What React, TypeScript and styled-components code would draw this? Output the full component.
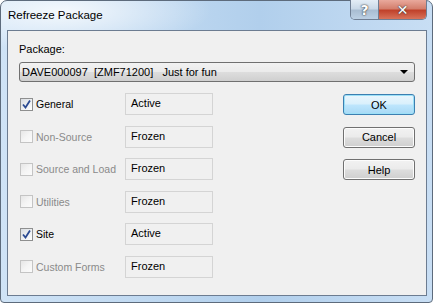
import styled, { createGlobalStyle } from 'styled-components';

const GlobalStyle = createGlobalStyle`
  html, body {
    margin: 0;
    padding: 0;
    background: #ffffff;
  }
  body {
    width: 433px;
    height: 303px;
    overflow: hidden;
    font-family: "Liberation Sans", Arial, sans-serif;
  }
`;

const Window = styled.div`
  box-sizing: border-box;
  width: 433px;
  height: 303px;
  display: flex;
  flex-direction: column;
  border: 1px solid #5d6b7c;
  border-radius: 7px 7px 4px 4px;
  background:
    radial-gradient(ellipse 150px 40px at 60px 10px, rgba(255, 255, 255, 0.8), rgba(255, 255, 255, 0) 100%),
    linear-gradient(90deg, #cfe3f6 0%, #bdd7f0 40%, #b1cfec 60%, #c8def4 100%);
`;

const TitleBar = styled.div`
  height: 29px;
  display: flex;
  align-items: flex-start;
  padding-left: 7px;
`;

const Title = styled.div`
  font-family: "Liberation Sans", Arial, sans-serif;
  font-size: 11.5px;
  line-height: 16px;
  padding-top: 6px;
  color: #000;
`;

const CaptionGroup = styled.div`
  margin-left: auto;
  margin-right: 5px;
  margin-top: -1px;
  display: flex;
  border: 1px solid #6f7e93;
  border-top: none;
  border-radius: 0 0 5px 5px;
  overflow: hidden;
`;

const CaptionButton = styled.div<{ $close?: boolean }>`
  width: ${p => (p.$close ? 47 : 27)}px;
  height: 19px;
  display: flex;
  align-items: center;
  justify-content: center;
  color: #fff;
  font-weight: bold;
  font-size: 14px;
  font-family: "DejaVu Sans", sans-serif;
  text-shadow: 0 0 2px #3a3a3a, 0 0 1px #3a3a3a;
  background: ${p =>
    p.$close
      ? 'linear-gradient(180deg, #e9a99c 0%, #d47f6d 45%, #c0422b 55%, #d8735a 100%)'
      : 'linear-gradient(180deg, #e4edf6 0%, #cad9e8 45%, #a9bdd2 55%, #bcd0e4 100%)'};
  & + & {
    border-left: 1px solid #6f7e93;
  }
`;

const Client = styled.div`
  flex: 1;
  margin: 0 5px 6px 6px;
  border: 1px solid #6c7c91;
  background: #f0f0f0;
  padding: 10px 11px 0 11px;
  font-size: 11px;
  color: #000;
`;

const FieldLabel = styled.div`
  line-height: 16px;
  height: 16px;
`;

const Combo = styled.div`
  margin-top: 5px;
  height: 18px;
  border: 1px solid #707070;
  border-radius: 3px;
  background: linear-gradient(180deg, #f2f2f2 0%, #ebebeb 48%, #dddddd 52%, #cfcfcf 100%);
  display: flex;
  align-items: center;
  padding: 0 6px 0 2px;
  white-space: pre;
`;

const ComboArrow = styled.span`
  margin-left: auto;
  width: 0;
  height: 0;
  border-left: 4px solid transparent;
  border-right: 4px solid transparent;
  border-top: 4px solid #000;
`;

const Body = styled.div`
  margin-top: 11px;
  display: flex;
`;

const Rows = styled.div`
  display: flex;
  flex-direction: column;
  gap: 10.6px;
`;

const Row = styled.div`
  display: grid;
  grid-template-columns: 106px 88px;
  height: 22px;
  align-items: center;
`;

const CheckLabel = styled.label<{ $disabled?: boolean }>`
  display: flex;
  align-items: center;
  gap: 3px;
  padding-left: 1px;
  font-size: 10.5px;
  color: ${p => (p.$disabled ? '#8a8a8a' : '#000')};
`;

const Box = styled.span<{ $disabled?: boolean }>`
  box-sizing: border-box;
  width: 13px;
  height: 13px;
  display: flex;
  align-items: center;
  justify-content: center;
  border: 1px solid ${p => (p.$disabled ? '#c4c4c4' : '#8e8f8f')};
  background: ${p =>
    p.$disabled
      ? 'linear-gradient(135deg, #e6e6e6 0%, #f4f4f4 50%, #fbfbfb 100%)'
      : 'linear-gradient(135deg, #d9dde2 0%, #eef0f2 55%, #ffffff 100%)'};
`;

const StatusBox = styled.div`
  box-sizing: border-box;
  height: 22px;
  border: 1px solid #d4d4d4;
  background: #f0f0f0;
  padding: 0 5px 2px 5px;
  display: flex;
  align-items: center;
`;

const Buttons = styled.div`
  margin-left: auto;
  margin-top: 1px;
  display: flex;
  flex-direction: column;
  gap: 11.5px;
`;

const DlgButton = styled.button<{ $default?: boolean }>`
  box-sizing: border-box;
  width: 72px;
  height: 21px;
  border: 1px solid ${p => (p.$default ? '#3c7fb1' : '#707070')};
  border-radius: 3px;
  font-family: "Liberation Sans", Arial, sans-serif;
  font-size: 11px;
  color: #000;
  padding: 0;
  background: ${p =>
    p.$default
      ? 'linear-gradient(180deg, #eaf6fd 0%, #d9f0fc 48%, #bee6fd 52%, #a7d9f5 100%)'
      : 'linear-gradient(180deg, #f2f2f2 0%, #ebebeb 48%, #dddddd 52%, #cfcfcf 100%)'};
  box-shadow: ${p => (p.$default ? 'inset 0 0 0 1px #9ce0f7' : 'inset 0 0 0 1px #fcfcfc')};
`;

const CheckMark = () => (
  <svg width="9" height="9" viewBox="0 0 9 9">
    <path d="M1 4.5 L3.5 7.5 L8 0.5" fill="none" stroke="#2a4a92" strokeWidth="1.8" />
  </svg>
);

type Item = { name: string; checked: boolean; status: string };

const items: Item[] = [
  { name: 'General', checked: true, status: 'Active' },
  { name: 'Non-Source', checked: false, status: 'Frozen' },
  { name: 'Source and Load', checked: false, status: 'Frozen' },
  { name: 'Utilities', checked: false, status: 'Frozen' },
  { name: 'Site', checked: true, status: 'Active' },
  { name: 'Custom Forms', checked: false, status: 'Frozen' },
];

function App() {
  return (
    <>
      <GlobalStyle />
      <Window>
        <TitleBar>
          <Title>Refreeze Package</Title>
          <CaptionGroup>
            <CaptionButton>?</CaptionButton>
            <CaptionButton $close>✕</CaptionButton>
          </CaptionGroup>
        </TitleBar>
        <Client>
          <FieldLabel>Package:</FieldLabel>
          <Combo>
            {'DAVE000097  [ZMF71200]   Just for fun'}
            <ComboArrow />
          </Combo>
          <Body>
            <Rows>
              {items.map(it => (
                <Row key={it.name}>
                  <CheckLabel $disabled={!it.checked}>
                    <Box $disabled={!it.checked}>{it.checked && <CheckMark />}</Box>
                    {it.name}
                  </CheckLabel>
                  <StatusBox>{it.status}</StatusBox>
                </Row>
              ))}
            </Rows>
            <Buttons>
              <DlgButton $default>OK</DlgButton>
              <DlgButton>Cancel</DlgButton>
              <DlgButton>Help</DlgButton>
            </Buttons>
          </Body>
        </Client>
      </Window>
    </>
  );
}

export default App;
